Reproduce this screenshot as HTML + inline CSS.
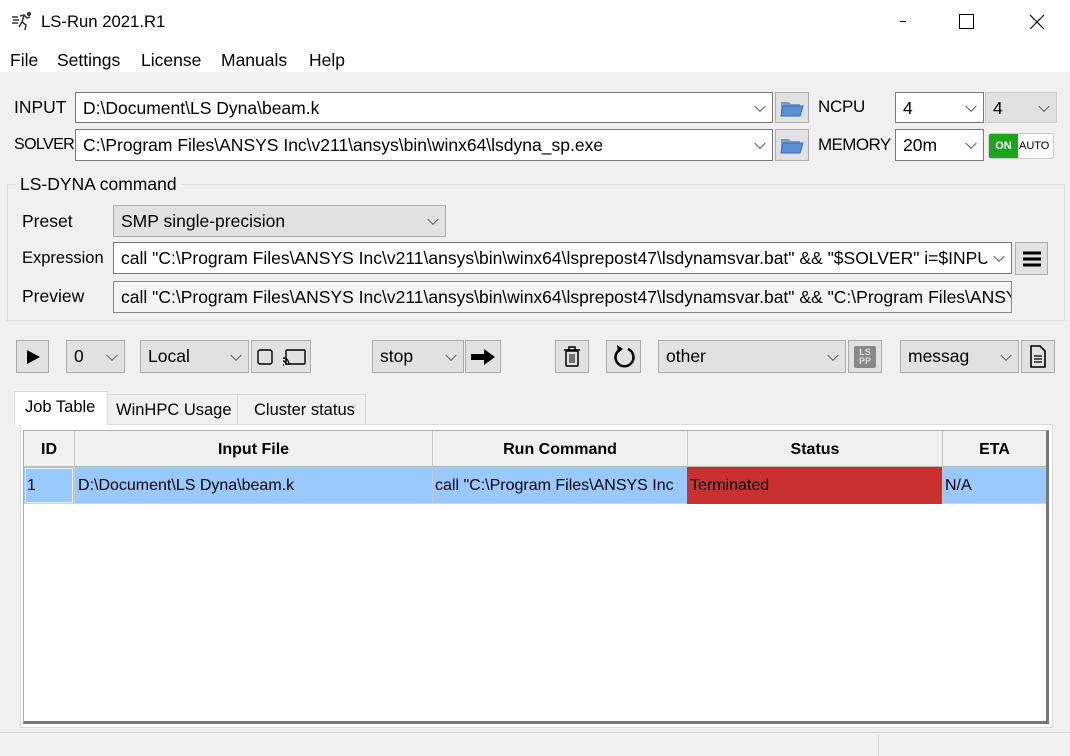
<!DOCTYPE html>
<html><head><meta charset="utf-8">
<style>
*{box-sizing:border-box;margin:0;padding:0}
body{width:1070px;height:756px;background:#f0f0f0;font-family:"Liberation Sans",sans-serif;font-size:17.5px;color:#000;position:relative;overflow:hidden}
.a{position:absolute}
.t{position:absolute;white-space:nowrap;line-height:20px}
.box{position:absolute;border:1px solid #7a7a7a;background:#fff;overflow:hidden;white-space:nowrap;line-height:29px;padding-left:7px;padding-top:1px}
.grey{background:#e1e1e1;border-color:#adadad}
.btn{position:absolute;border:1px solid #adadad;background:#e1e1e1;display:flex;align-items:center;justify-content:center}
.chev{position:absolute;right:8px;top:50%;width:8px;height:8px;border-right:1.3px solid #555;border-bottom:1.3px solid #555;transform:translateY(-70%) rotate(45deg)}
.tb{font-size:16px}
</style></head><body>
<div class="a" style="left:0;top:0;width:1070px;height:72px;background:#fff"></div>
<svg class="a" style="left:11px;top:11px" width="22" height="20" viewBox="0 0 22 20"><g stroke="#333" stroke-width="1.5" fill="none"><path d="M1 6h6M2 9h6M1 12h6"/><path d="M9 5l4-1 3 3 3-1M13 4l-2 7 4 3-1 5M11 11l-3 5"/></g><circle cx="18" cy="3" r="2" fill="#333"/></svg>
<div class="t" style="left:41px;top:12px;font-size:16.7px">LS-Run 2021.R1</div>
<div class="a" style="left:900px;top:21px;width:6px;height:1px;background:#000"></div>
<div class="a" style="left:959px;top:14px;width:15px;height:15px;border:1px solid #000"></div>
<svg class="a" style="left:1029px;top:14px" width="16" height="16"><path d="M1 1L15 15M15 1L1 15" stroke="#000" stroke-width="1.2"/></svg>
<div class="t" style="left:10px;top:50px">File</div>
<div class="t" style="left:57px;top:50px">Settings</div>
<div class="t" style="left:141px;top:50px">License</div>
<div class="t" style="left:221px;top:50px">Manuals</div>
<div class="t" style="left:309px;top:50px">Help</div>

<div class="t" style="left:14px;top:97px">INPUT</div>
<div class="box" style="left:75px;top:92px;width:698px;height:31px">D:\Document\LS Dyna\beam.k<span class="chev"></span></div>
<div class="btn" style="left:775px;top:92px;width:34px;height:31px"><svg width="24" height="20"><path d="M1 4h8l2 2h9v12H1z" fill="#7a9cc8"/><path d="M3 8h20l-3 10H1z" fill="#5b8fd6" stroke="#3a6db0"/></svg></div>
<div class="t" style="left:818px;top:97px;font-size:17px;letter-spacing:-0.3px">NCPU</div>
<div class="box" style="left:895px;top:92px;width:89px;height:31px">4<span class="chev"></span></div>
<div class="box grey" style="left:985px;top:92px;width:72px;height:31px;border-color:#ccc">4<span class="chev"></span></div>

<div class="t" style="left:14px;top:135px;font-size:16px;letter-spacing:-0.6px">SOLVER</div>
<div class="box" style="left:75px;top:129px;width:698px;height:32px">C:\Program Files\ANSYS Inc\v211\ansys\bin\winx64\lsdyna_sp.exe<span class="chev"></span></div>
<div class="btn" style="left:775px;top:129px;width:34px;height:32px"><svg width="24" height="20"><path d="M1 4h8l2 2h9v12H1z" fill="#7a9cc8"/><path d="M3 8h20l-3 10H1z" fill="#5b8fd6" stroke="#3a6db0"/></svg></div>
<div class="t" style="left:818px;top:135px;font-size:17px;letter-spacing:-0.6px">MEMORY</div>
<div class="box" style="left:895px;top:129px;width:89px;height:32px">20m<span class="chev"></span></div>
<div class="a" style="left:988px;top:133px;width:66px;height:26px;border:1px solid #ccc;border-radius:3px;background:#fafafa;overflow:hidden">
 <div class="a" style="left:0;top:0;width:29px;height:24px;background:#1aa51a;color:#fff;font-size:11px;font-weight:bold;line-height:24px;text-align:center">ON</div>
 <div class="a" style="left:30px;top:0;font-size:11px;line-height:24px">AUTO</div></div>

<div class="a" style="left:7px;top:184px;width:1058px;height:137px;border:1px solid #dcdcdc"></div>
<div class="t" style="left:16px;top:174px;background:#f0f0f0;padding:0 4px">LS-DYNA command</div>
<div class="t" style="left:22px;top:211px">Preset</div>
<div class="box grey" style="left:113px;top:205px;width:333px;height:32px">SMP single-precision<span class="chev"></span></div>
<div class="t" style="left:22px;top:248px;font-size:16.5px">Expression</div>
<div class="box" style="left:113px;top:242px;width:899px;height:32px">call "C:\Program Files\ANSYS Inc\v211\ansys\bin\winx64\lsprepost47\lsdynamsvar.bat" &amp;&amp; "$SOLVER" i=$INPUT<span class="chev" style="background:#fff;box-shadow:0 0 0 8px #fff"></span></div>
<div class="btn" style="left:1015px;top:242px;width:33px;height:33px"><svg width="20" height="18"><path d="M1 3h18M1 9h18M1 15h18" stroke="#000" stroke-width="3"/></svg></div>
<div class="t" style="left:22px;top:286px">Preview</div>
<div class="box" style="left:113px;top:281px;width:899px;height:32px;background:#f4f4f4;border-color:#888">call "C:\Program Files\ANSYS Inc\v211\ansys\bin\winx64\lsprepost47\lsdynamsvar.bat" &amp;&amp; "C:\Program Files\ANSYS</div>

<div class="btn" style="left:16px;top:340px;width:33px;height:33px"><svg width="16" height="16"><path d="M2 1L15 8L2 15z"/></svg></div>
<div class="box grey" style="left:66px;top:340px;width:59px;height:33px">0<span class="chev"></span></div>
<div class="box grey" style="left:140px;top:340px;width:109px;height:33px">Local<span class="chev"></span></div>
<div class="btn" style="left:251px;top:340px;width:60px;height:33px;justify-content:space-around"><svg width="16" height="16"><rect x="1" y="1" width="14" height="14" rx="2" fill="none" stroke="#000" stroke-width="1.4"/></svg><svg width="24" height="18"><rect x="4" y="2" width="19" height="14" rx="1" fill="none" stroke="#000" stroke-width="1.4"/><path d="M1 10c4 0 6 3 6 7M1 13c2 0 3 2 3 4M1 17h1" stroke="#000" stroke-width="1.4" fill="none"/></svg></div>
<div class="box grey" style="left:372px;top:340px;width:92px;height:33px">stop<span class="chev"></span></div>
<div class="btn" style="left:465px;top:340px;width:36px;height:33px"><svg width="26" height="18"><path d="M1 6h13V1l11 8-11 8v-5H1z"/></svg></div>
<div class="btn" style="left:555px;top:340px;width:34px;height:33px"><svg width="20" height="22"><path d="M2 4h16M7 4V1h6v3" stroke="#000" stroke-width="1.5" fill="none"/><rect x="4" y="5" width="12" height="15" rx="1" fill="none" stroke="#000" stroke-width="1.5"/><path d="M8 8v9M10 8v9M12 8v9" stroke="#000"/></svg></div>
<div class="btn" style="left:606px;top:340px;width:35px;height:33px"><svg width="26" height="26"><path d="M10 5A9 9 0 1 0 17 5" fill="none" stroke="#000" stroke-width="2.5"/><path d="M6 1l6 4-5 4z"/></svg></div>
<div class="box grey" style="left:658px;top:340px;width:188px;height:33px">other<span class="chev"></span></div>
<div class="btn" style="left:848px;top:340px;width:34px;height:33px"><div style="width:22px;height:22px;background:#888;color:#ddd;font-size:9px;font-weight:bold;line-height:9px;text-align:center;padding-top:2px;border-radius:2px">LS<br>PP</div></div>
<div class="box grey" style="left:900px;top:340px;width:119px;height:33px">messag<span class="chev"></span></div>
<div class="btn" style="left:1021px;top:340px;width:34px;height:33px"><svg width="18" height="24"><path d="M2 1h9l5 5v16H2z" fill="none" stroke="#000" stroke-width="1.6"/><path d="M5 11h8M5 14h8M5 17h8" stroke="#000" stroke-width="1.3"/></svg></div>

<div class="a" style="left:107px;top:394px;width:131px;height:31px;border:1px solid #d9d9d9;background:#f0f0f0"></div>
<div class="a" style="left:237px;top:394px;width:129px;height:31px;border:1px solid #d9d9d9;background:#f0f0f0"></div>
<div class="a" style="left:20px;top:424px;width:1033px;height:304px;border:1px solid #d9d9d9;background:#fff"></div>
<div class="a" style="left:14px;top:391px;width:94px;height:34px;border:1px solid #d9d9d9;border-bottom:none;background:#fff"></div>
<div class="t" style="left:25px;top:397px;font-size:16.5px">Job Table</div>
<div class="t" style="left:116px;top:400px;font-size:16.5px">WinHPC Usage</div>
<div class="t" style="left:254px;top:400px;font-size:16.5px">Cluster status</div>

<div class="a" style="left:23px;top:430px;width:1026px;height:294px;border:1px solid #ababab;border-right:3px solid #777;border-bottom:3px solid #777;background:#fff"></div>
<div class="a" style="left:24px;top:431px;width:1022px;height:36px;background:#f0f0f0;border-bottom:1px solid #b8b8b8"></div>
<div class="a" style="left:24px;top:467px;width:1022px;height:37px;background:#99c9ff;border-bottom:1px solid #d0d0d0"></div>
<div class="a" style="left:687px;top:467px;width:255px;height:37px;background:#c93131"></div>
<div class="a" style="left:25px;top:468px;width:48px;height:35px;border:1px solid #e8f1ff"></div>
<div class="a" style="left:74px;top:431px;width:1px;height:73px;background:#c8c8c8"></div>
<div class="a" style="left:432px;top:431px;width:1px;height:73px;background:#c8c8c8"></div>
<div class="a" style="left:687px;top:431px;width:1px;height:36px;background:#c8c8c8"></div>
<div class="a" style="left:942px;top:431px;width:1px;height:73px;background:#c8c8c8"></div>
<div class="t tb" style="left:24px;top:440px;width:50px;text-align:center;font-weight:bold">ID</div>
<div class="t tb" style="left:75px;top:440px;width:357px;text-align:center;font-weight:bold">Input File</div>
<div class="t tb" style="left:433px;top:440px;width:254px;text-align:center;font-weight:bold">Run Command</div>
<div class="t tb" style="left:688px;top:440px;width:254px;text-align:center;font-weight:bold">Status</div>
<div class="t tb" style="left:943px;top:440px;width:103px;text-align:center;font-weight:bold">ETA</div>
<div class="t tb" style="left:27px;top:476px">1</div>
<div class="t tb" style="left:78px;top:476px">D:\Document\LS Dyna\beam.k</div>
<div class="t tb" style="left:435px;top:476px;width:251px;overflow:hidden">call "C:\Program Files\ANSYS Inc</div>
<div class="t tb" style="left:690px;top:476px">Terminated</div>
<div class="t tb" style="left:945px;top:476px">N/A</div>

<div class="a" style="left:0;top:732px;width:1070px;height:1px;background:#d7d7d7"></div>
<div class="a" style="left:878px;top:735px;width:1px;height:21px;background:#d7d7d7"></div>
</body></html>
